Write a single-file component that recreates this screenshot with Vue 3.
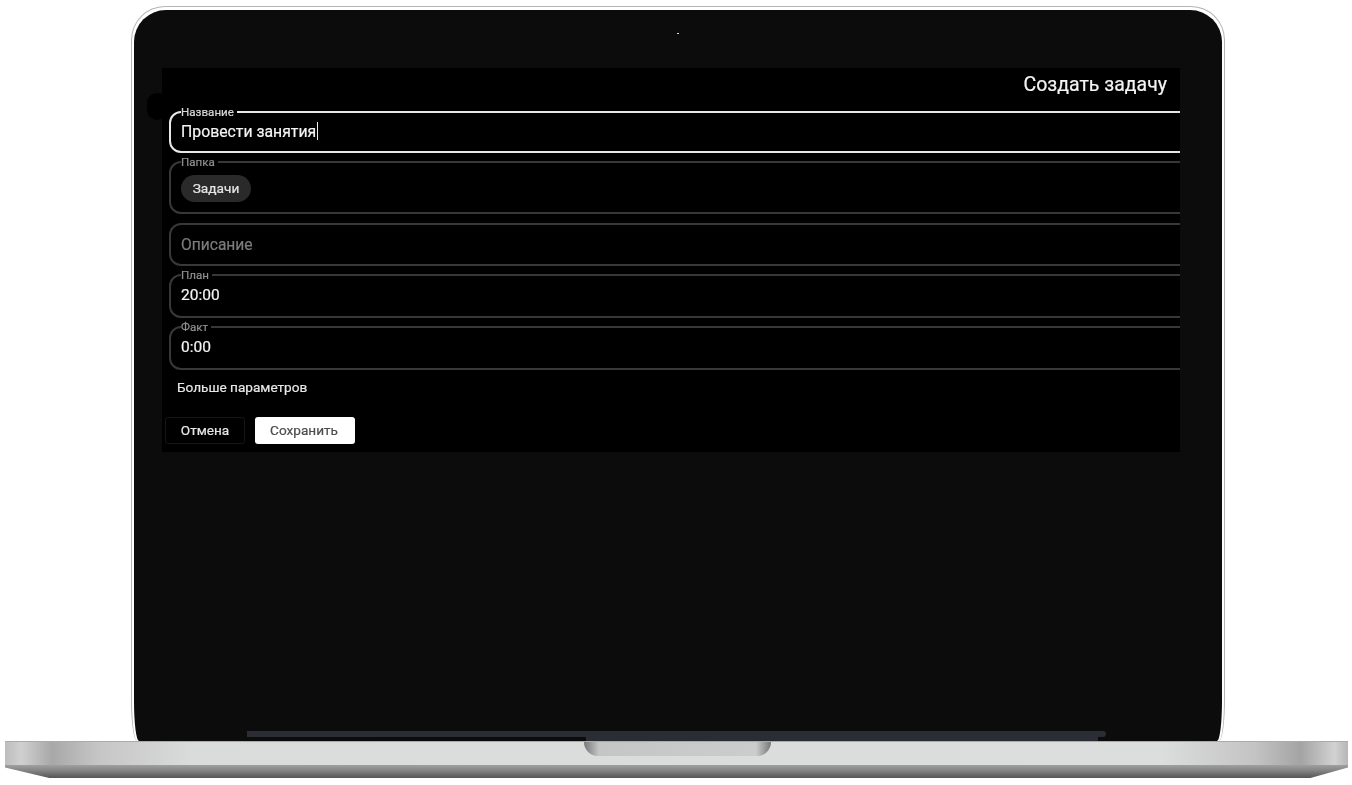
<script setup>
const fields = [
  { label: '', placeholder: 'Описание', cls: 'desc' },
  { label: 'План', value: '20:00', cls: 'plain' },
  { label: 'Факт', value: '0:00', cls: 'plain' }
]
</script>

<template>
  <div class="page">
    <div class="lid">
      <div class="bezel">
        <span class="camera"></span>
        <span class="blob"></span>
        <div class="screen">
          <h1 class="title">Создать задачу</h1>
          <div class="form">
            <fieldset class="field name">
              <legend>Название</legend>
              <span class="value big">Провести занятия<i class="caret"></i></span>
            </fieldset>
            <fieldset class="field folder">
              <legend>Папка</legend>
              <span class="chip">Задачи</span>
            </fieldset>
            <fieldset v-for="f in fields" :key="f.cls + f.label" class="field" :class="f.cls">
              <legend v-if="f.label">{{ f.label }}</legend>
              <span v-if="f.value" class="value">{{ f.value }}</span>
              <span v-else class="placeholder">{{ f.placeholder }}</span>
            </fieldset>
          </div>
          <div class="more">Больше параметров</div>
          <div class="actions">
            <button class="btn cancel">Отмена</button>
            <button class="btn save">Сохранить</button>
          </div>
        </div>
        <span class="strip"></span>
        <span class="strip-low"></span>
      </div>
    </div>
    <div class="base">
      <div class="deck"><span class="notch"></span></div>
      <div class="edge"></div>
    </div>
  </div>
</template>

<style>
html, body { margin: 0; background: #fff; }
</style>

<style scoped>
.page {
  width: 1352px;
  height: 785px;
  padding-top: 6px;
  box-sizing: border-box;
  overflow: hidden;
  background: #fff;
  font-family: Roboto, "Noto Sans", sans-serif;
}
.lid {
  width: 1094px;
  height: 735px;
  margin-left: 131px;
  box-sizing: border-box;
  border: 1px solid #b4b4b4;
  border-bottom: 0;
  border-radius: 34px 34px 6px 6px / 34px 34px 42px 42px;
  padding: 3px 2px 0;
  background: #fff;
}
.bezel {
  position: relative;
  height: 100%;
  box-sizing: border-box;
  padding: 58px 42px 0 28px;
  background: #0c0c0c;
  border-radius: 32px 32px 5px 5px / 32px 32px 40px 40px;
}
.camera {
  position: absolute;
  left: 543px;
  top: 23px;
  width: 2px;
  height: 1px;
  background: #ddd;
}
.blob {
  position: absolute;
  left: 13px;
  top: 83px;
  width: 20px;
  height: 27px;
  border-radius: 10px;
  background: #000;
}
.strip {
  position: absolute;
  left: 113px;
  bottom: 4px;
  width: 859px;
  height: 6px;
  border-radius: 0 4px 4px 0;
  background: #2b2d35;
}
.strip-low {
  position: absolute;
  left: 452px;
  bottom: 0;
  width: 512px;
  height: 4px;
  background: #2b2d35;
}
.screen {
  position: relative;
  height: 384px;
  box-sizing: border-box;
  overflow: hidden;
  background: #000;
  color: #fff;
  filter: blur(0.35px);
  -webkit-text-stroke: 0.2px;
}
.title {
  margin: 0;
  padding: 5px 13px 0 0;
  height: 38px;
  box-sizing: border-box;
  text-align: right;
  font-size: 19.5px;
  line-height: 24px;
  font-weight: 400;
  color: #f4f4f4;
}
.form {
  display: flex;
  flex-direction: column;
  gap: 10px;
  width: 1060px;
  margin-left: 7px;
}
.field {
  display: block;
  margin: 0;
  min-width: 0;
  padding: 0 10px;
  box-sizing: border-box;
  border: 2px solid #383838;
  border-radius: 12px;
}
.field legend {
  padding: 0 3px 0 0;
  margin-left: 0;
  font-size: 11.6px;
  line-height: 12px;
  color: #8f8f8f;
}
.name {
  height: 47px;
  border-color: #e8e8e8;
}
.name legend { color: #d8d8d8; }
.folder { height: 58px; margin-top: -7px; }
.desc { height: 43px; margin-top: -1px; padding-top: 10px; }
.plain { height: 49px; margin-top: -7px; }
.value {
  display: block;
  margin-top: 4px;
  font-size: 15.5px;
  line-height: 20px;
  color: #f4f4f4;
}
.value.big { font-size: 15.8px; }
.caret {
  display: inline-block;
  width: 1px;
  height: 18px;
  margin-left: 1px;
  vertical-align: -3px;
  background: #eee;
}
.placeholder {
  display: block;
  font-size: 15.6px;
  line-height: 20px;
  color: #7d7d7d;
}
.chip {
  display: inline-flex;
  align-items: center;
  height: 27px;
  margin-top: 7px;
  padding: 0 11px 2px;
  box-sizing: border-box;
  min-width: 70px;
  justify-content: center;
  border-radius: 14px;
  background: #2a2a2a;
  color: #e6e6e6;
  font-size: 13.7px;
}
.more {
  margin: 9px 0 0 15px;
  font-size: 13.6px;
  line-height: 16px;
  color: #e8e8e8;
}
.actions {
  display: flex;
  gap: 10px;
  margin: 22px 0 0 3px;
}
.btn {
  height: 27px;
  padding: 0 0 2px;
  border-radius: 3px;
  font-family: inherit;
  font-size: 13.6px;
}
.cancel {
  width: 80px;
  border: 1px solid #161616;
  background: #000;
  color: #e8e8e8;
}
.save {
  width: 100px;
  border: 0;
  padding-right: 2px;
  background: #fff;
  color: #4c4c4c;
}
.base {
  width: 1343px;
  margin-left: 5px;
}
.deck {
  position: relative;
  height: 24px;
  border-top: 1px solid #aaa;
  box-sizing: border-box;
  background: linear-gradient(90deg, #bdbdbd 0, #d0d0d0 1.2%, #a8a8a8 3.5%, #c6c6c6 7%, #dadbdb 14%, #dcdddd 86%, #c4c4c4 93%, #a4a4a4 96.5%, #d2d2d2 99%, #b6b6b6 100%);
}
.notch {
  display: block;
  position: absolute;
  left: 579px;
  top: 0;
  width: 187px;
  height: 14px;
  border-radius: 0 0 16px 16px;
  background: linear-gradient(90deg, #777 0, #c4c5c5 8%, #cbcccc 92%, #777 100%);
}
.edge {
  height: 13px;
  clip-path: polygon(0 0, 100% 0, 100% 20%, 97.2% 100%, 3.3% 100%, 0 20%);
  background: linear-gradient(180deg, #a0a0a0 0, #868686 40%, #555 100%);
}
</style>
